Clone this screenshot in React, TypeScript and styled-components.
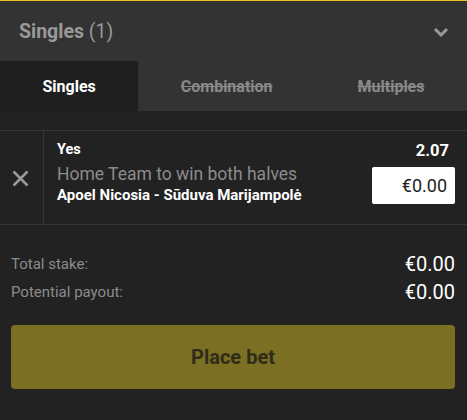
import styled, { createGlobalStyle } from "styled-components";

const GlobalStyle = createGlobalStyle`
  html, body {
    margin: 0;
    padding: 0;
    background: #222222;
  }
  body {
    font-family: Roboto, "Liberation Sans", Arial, sans-serif;
    -webkit-font-smoothing: antialiased;
  }
`;

const Slip = styled.div`
  width: 467px;
  height: 420px;
  background: #222222;
  border-top: 1px solid #e6c31e;
  box-sizing: border-box;
  overflow: hidden;
`;

const Header = styled.header`
  display: flex;
  align-items: center;
  justify-content: space-between;
  height: 60px;
  padding: 0 18px 0 19px;
  background: #333333;
`;

const Title = styled.h2`
  margin: 0;
  font-size: 19.5px;
  font-weight: 700;
  color: #999999;

  span {
    font-weight: 400;
  }
`;

const Chevron = styled.svg`
  width: 16px;
  height: 10px;
  margin-top: 1px;
`;

const Tabs = styled.nav`
  display: flex;
  height: 50px;
  background: #333333;
`;

const Tab = styled.div<{ $active?: boolean; $disabled?: boolean }>`
  flex: 1 1 auto;
  display: flex;
  align-items: center;
  justify-content: center;
  font-size: 16px;
  font-weight: 700;
  color: ${(p) => (p.$active ? "#ffffff" : "#8a8a8a")};
  background: ${(p) => (p.$active ? "#1f1f1f" : "#333333")};
  text-decoration: ${(p) => (p.$disabled ? "line-through" : "none")};
`;

const Selections = styled.section`
  padding-top: 19px;
`;

const Bet = styled.div`
  display: flex;
  height: 93px;
  border-top: 1px solid #363636;
  border-bottom: 1px solid #363636;
`;

const RemoveCell = styled.div`
  display: flex;
  align-items: center;
  justify-content: center;
  width: 43px;
  flex-shrink: 0;
  border-right: 1px solid #363636;

  svg {
    width: 17px;
    height: 17px;
    margin: 2px 2px 0 0;
  }
`;

const BetBody = styled.div`
  flex: 1;
  display: flex;
  justify-content: space-between;
  padding: 10px 12px 0 13px;
`;

const BetInfo = styled.div`
  display: flex;
  flex-direction: column;
`;

const Outcome = styled.div`
  font-size: 14.5px;
  font-weight: 700;
  color: #ffffff;
  line-height: 18px;
`;

const Market = styled.div`
  font-size: 17.5px;
  color: #8c8c8c;
  line-height: 22px;
  margin-top: 4px;
`;

const Event = styled.div`
  font-size: 15px;
  font-weight: 700;
  color: #ffffff;
  line-height: 18px;
  margin-top: 1px;
`;

const BetSide = styled.div`
  display: flex;
  flex-direction: column;
  align-items: flex-end;
`;

const Odds = styled.div`
  font-size: 16.5px;
  font-weight: 700;
  color: #ffffff;
  line-height: 20px;
  margin-right: 6px;
`;

const StakeInput = styled.div`
  box-sizing: border-box;
  width: 83px;
  height: 37px;
  margin-top: 6px;
  padding-right: 8px;
  display: flex;
  align-items: center;
  justify-content: flex-end;
  background: #ffffff;
  border-radius: 2px;
  font-size: 18px;
  color: #222222;
`;

const Summary = styled.section`
  padding: 25px 12px 0 11px;
`;

const SummaryRow = styled.div`
  display: flex;
  align-items: center;
  justify-content: space-between;
  height: 28px;
`;

const Label = styled.span`
  font-size: 15px;
  color: #8c8c8c;
`;

const Amount = styled.span`
  font-size: 20px;
  color: #ffffff;
`;

const PlaceBet = styled.button`
  display: block;
  width: 444px;
  height: 64px;
  margin: 19px 0 0 11px;
  border: none;
  border-radius: 4px;
  background: #7a6f22;
  color: #2f2c1a;
  font-family: inherit;
  font-size: 20px;
  font-weight: 700;
`;

export default function App() {
  return (
    <>
      <GlobalStyle />
      <Slip>
        <Header>
          <Title>
            Singles <span>(1)</span>
          </Title>
          <Chevron viewBox="0 0 16 10">
            <path
              d="M2 2 L8 8 L14 2"
              fill="none"
              stroke="#999999"
              strokeWidth="3"
            />
          </Chevron>
        </Header>
        <Tabs>
          <Tab $active>Singles</Tab>
          <Tab $disabled>Combination</Tab>
          <Tab $disabled>Multiples</Tab>
        </Tabs>
        <Selections>
          <Bet>
            <RemoveCell>
              <svg viewBox="0 0 17 17">
                <path
                  d="M1.5 1.5 L15.5 15.5 M15.5 1.5 L1.5 15.5"
                  stroke="#9a9a9a"
                  strokeWidth="2.5"
                />
              </svg>
            </RemoveCell>
            <BetBody>
              <BetInfo>
                <Outcome>Yes</Outcome>
                <Market>Home Team to win both halves</Market>
                <Event>Apoel Nicosia - Sūduva Marijampolė</Event>
              </BetInfo>
              <BetSide>
                <Odds>2.07</Odds>
                <StakeInput>€0.00</StakeInput>
              </BetSide>
            </BetBody>
          </Bet>
        </Selections>
        <Summary>
          <SummaryRow>
            <Label>Total stake:</Label>
            <Amount>€0.00</Amount>
          </SummaryRow>
          <SummaryRow>
            <Label>Potential payout:</Label>
            <Amount>€0.00</Amount>
          </SummaryRow>
        </Summary>
        <PlaceBet>Place bet</PlaceBet>
      </Slip>
    </>
  );
}
